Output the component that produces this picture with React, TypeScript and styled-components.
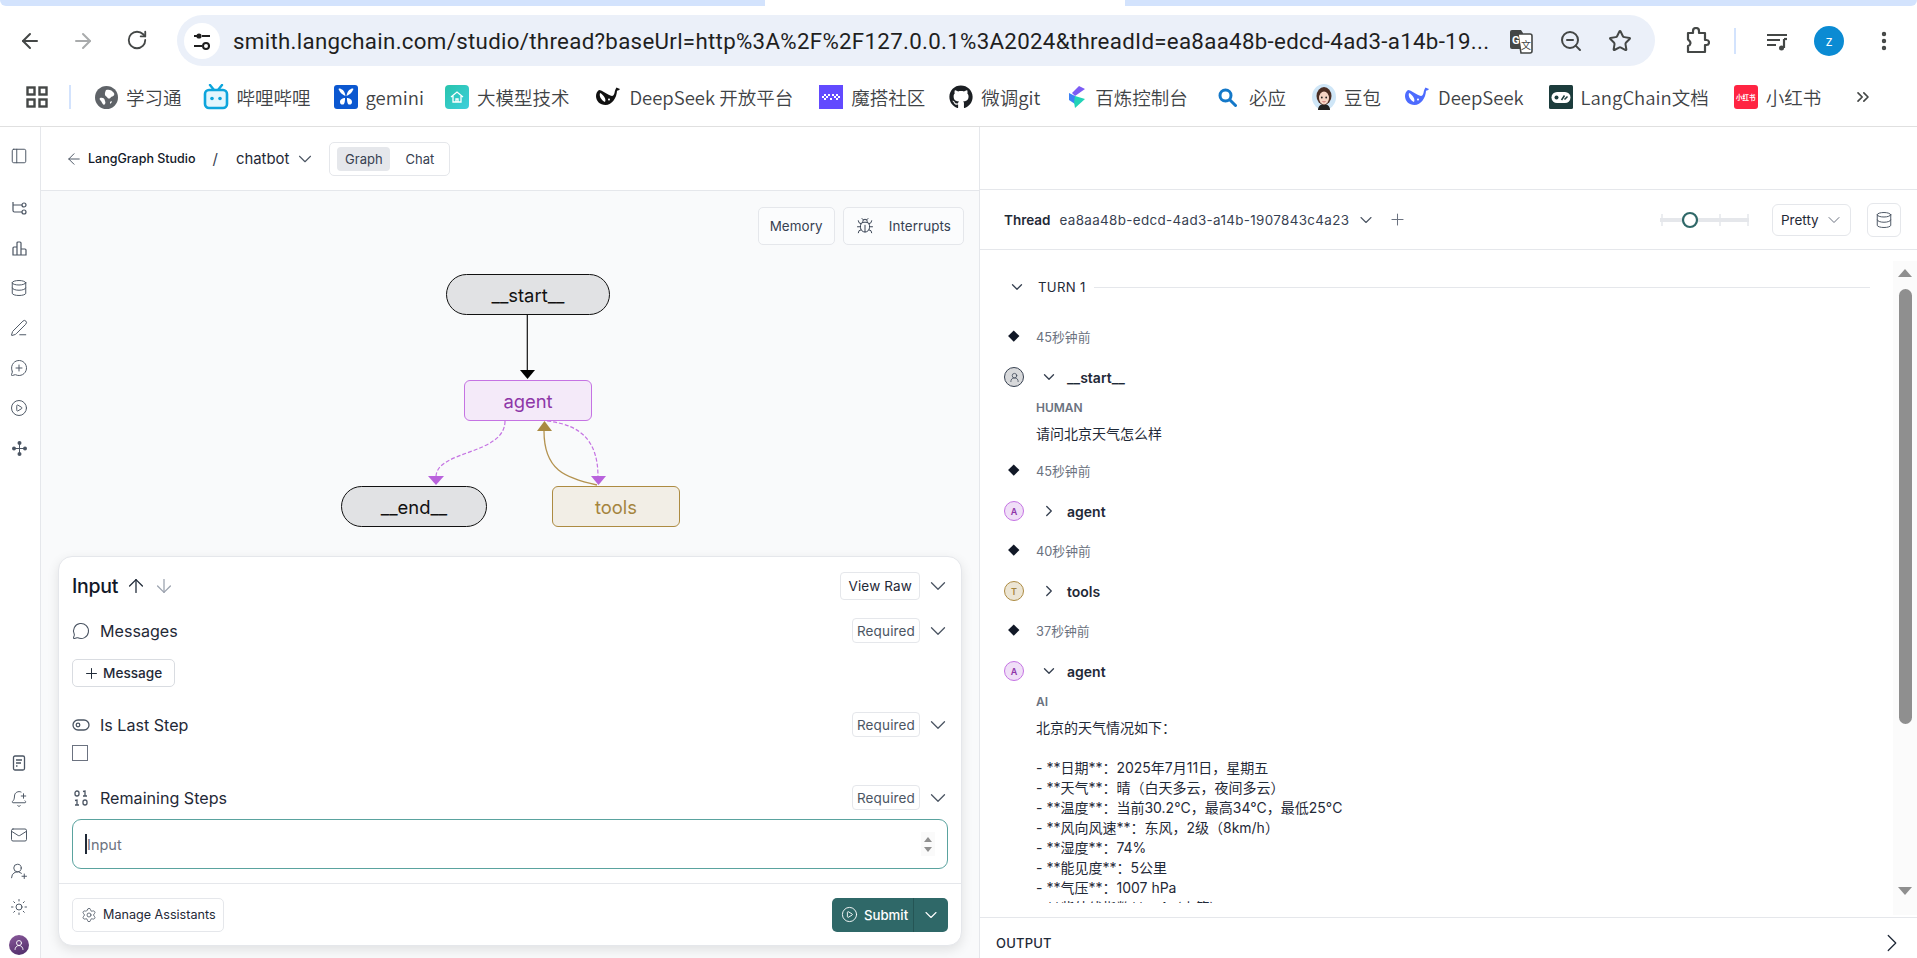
import React from 'react';
import styled, { createGlobalStyle } from 'styled-components';
import {
  ArrowDown, ArrowLeft, ArrowRight, ArrowUp, BellPlus, Bug, ChevronDown, ChevronRight, CirclePlay, Database,
  EllipsisVertical, Mail, MessageCircle, MessageCirclePlus, PanelLeft, PenLine, Plus, RotateCw, Settings,
  Star, Sun, UserRound, UserRoundPlus, ZoomOut, ChevronsRight,
} from 'lucide-react';
import { FaGithub } from 'react-icons/fa';

const GlobalStyle = createGlobalStyle`
  html, body { margin: 0; padding: 0; background: #fff; overflow: hidden; }
  body { font-family: Inter, "Noto Sans CJK SC", sans-serif; color: #111827; }
  * { box-sizing: border-box; }
`;

const Page = styled.div`
  width: 1917px;
  height: 958px;
  display: flex;
  flex-direction: column;
  overflow: hidden;
`;

/* browser chrome */
const TabStrip = styled.div`
  height: 6px;
  flex: none;
  display: flex;
  justify-content: space-between;
`;
const InactiveTabs = styled.div<{ $side: 'left' | 'right' }>`
  width: ${p => (p.$side === 'left' ? 765 : 792)}px;
  background: #d3e3fd;
  border-bottom-${p => p.$side}-radius: 6px;
`;
const Toolbar = styled.div`
  display: flex;
  align-items: center;
  height: 51px;
  margin-top: 9px;
  padding-left: 18px;
  flex: none;
  color: #444746;
`;
const NavButton = styled.div<{ $off?: boolean; $gap?: number }>`
  width: 24px;
  height: 24px;
  margin-left: ${p => p.$gap ?? 0}px;
  color: ${p => (p.$off ? '#a9abac' : '#444746')};
`;
const AddressBar = styled.div`
  width: 1478px;
  height: 51px;
  margin-left: 27px;
  padding-left: 7px;
  border-radius: 26px;
  background: #ebf0f9;
  display: flex;
  align-items: center;
`;
const TuneBadge = styled.div`
  width: 36px;
  height: 36px;
  border-radius: 50%;
  background: #fff;
  display: flex;
  align-items: center;
  justify-content: center;
  flex: none;
`;
const UrlText = styled.div`
  margin-left: 13px;
  width: 1273px;
  font-family: Roboto, sans-serif;
  font-size: 22.3px;
  letter-spacing: 0.3px;
  color: #1f1f1f;
  white-space: nowrap;
  overflow: hidden;
`;
const BarIcons = styled.div`
  display: flex;
  align-items: center;
`;
const Slot = styled.div<{ $w?: number; $gap?: number }>`
  width: ${p => p.$w ?? 40}px;
  height: 40px;
  margin-left: ${p => p.$gap ?? 0}px;
  display: flex;
  align-items: center;
  justify-content: center;
  flex: none;
`;
const ToolDivider = styled.div`
  width: 2px;
  height: 26px;
  margin-left: 17px;
  background: #d3e3fd;
`;
const ProfileDot = styled.div`
  width: 30px;
  height: 30px;
  border-radius: 50%;
  background: #0b8bd3;
  color: #fff;
  font-size: 13px;
  display: flex;
  align-items: center;
  justify-content: center;
`;
const BookmarkBar = styled.div`
  height: 61px;
  flex: none;
  padding: 11px 0 9px 26px;
  display: flex;
  align-items: center;
  border-bottom: 1px solid #e0e0e0;
`;
const BookmarkDivider = styled.div`
  width: 2px;
  height: 24px;
  margin: 0 24px 0 21px;
  background: #d3e3fd;
`;
const Bookmark = styled.div<{ $gap?: number }>`
  display: flex;
  align-items: center;
  gap: 8px;
  margin-right: ${p => p.$gap ?? 25}px;
  font-family: "Noto Sans CJK SC", sans-serif;
  font-size: 18.5px;
  font-weight: 350;
  color: #3f4346;
  white-space: nowrap;
  svg { flex: none; }
`;
const XhsLogo = styled.div`
  width: 24px;
  height: 24px;
  background: #ff2442;
  border-radius: 3px;
  color: #fff;
  font-size: 6.5px;
  font-weight: 700;
  display: flex;
  align-items: center;
  justify-content: center;
  white-space: nowrap;
`;
const MoreBookmarks = styled.div`
  margin-left: 7px;
  display: flex;
  color: #444746;
`;

/* studio */
const Studio = styled.div`
  flex: 1;
  min-height: 0;
  display: flex;
`;
const Sidebar = styled.nav`
  width: 41px;
  flex: none;
  border-right: 1px solid #e5e7eb;
  display: flex;
  flex-direction: column;
  justify-content: space-between;
  align-items: center;
  color: #4b5563;
  padding: 19px 2px 3px 0;
`;
const SideGroup = styled.div`
  display: flex;
  flex-direction: column;
  align-items: center;
`;
const SideIcon = styled.div<{ $h?: number; $mb?: number }>`
  height: ${p => p.$h ?? 40}px;
  margin-bottom: ${p => p.$mb ?? 0}px;
  display: flex;
  align-items: center;
  justify-content: center;
`;
const SideAvatar = styled.div`
  width: 20px;
  height: 20px;
  margin-top: 10px;
  border-radius: 50%;
  background: linear-gradient(160deg, #8a5a9c, #4d2a66);
  color: #fff;
  display: flex;
  align-items: center;
  justify-content: center;
`;
const GraphPane = styled.section`
  width: 939px;
  flex: none;
  display: flex;
  flex-direction: column;
  border-right: 1px solid #e5e7eb;
  background: #f9fafb;
`;
const StudioHeader = styled.header`
  height: 64px;
  flex: none;
  padding-left: 24px;
  display: flex;
  align-items: center;
  background: #fff;
  border-bottom: 1px solid #e5e7eb;
`;
const Crumb = styled.div`
  display: flex;
  align-items: center;
  gap: 5px;
  font-size: 12.5px;
  font-weight: 450;
  color: #111827;
  svg { color: #4b5563; flex: none; }
`;
const Slash = styled.span`
  margin: 0 18px 0 17px;
  font-size: 15px;
  color: #374151;
`;
const GraphName = styled.div`
  display: flex;
  align-items: center;
  gap: 5px;
  font-size: 14.9px;
  color: #1f2937;
  svg { color: #4b5563; flex: none; }
`;
const ViewTabs = styled.div`
  margin-left: 13px;
  height: 34px;
  padding: 4px 0 4px 7px;
  display: flex;
  align-items: center;
  border: 1px solid #e5e7eb;
  border-radius: 5px;
`;
const ViewTab = styled.div<{ $active?: boolean }>`
  height: 24px;
  width: ${p => (p.$active ? 53 : 59)}px;
  border-radius: 4px;
  display: flex;
  align-items: center;
  justify-content: center;
  font-size: 13px;
  color: #374151;
  background: ${p => (p.$active ? '#e5e7eb' : 'transparent')};
`;
const Canvas = styled.div`
  position: relative;
  flex: 1;
  min-height: 0;
`;
const CanvasTools = styled.div`
  position: absolute;
  top: 16px;
  right: 15px;
  display: flex;
  gap: 8px;
`;
const ToolButton = styled.div<{ $pad: number; $gap?: number }>`
  height: 38px;
  padding: 0 ${p => p.$pad}px;
  display: flex;
  align-items: center;
  gap: ${p => p.$gap ?? 0}px;
  font-size: 13.4px;
  letter-spacing: 0.1px;
  color: #374151;
  background: #fbfcfd;
  border: 1px solid #e5e7eb;
  border-radius: 5px;
`;
const Edges = styled.svg`
  position: absolute;
  inset: 0;
`;
const GraphNode = styled.div<{ $x: number; $y: number; $w: number; $kind: 'plain' | 'agent' | 'tools' }>`
  position: absolute;
  left: ${p => p.$x}px;
  top: ${p => p.$y}px;
  width: ${p => p.$w}px;
  height: 41px;
  display: flex;
  align-items: center;
  justify-content: center;
  font-size: 18.4px;
  border-radius: ${p => (p.$kind === 'plain' ? '21px' : '6px')};
  border: 1px solid ${p => (p.$kind === 'plain' ? '#111' : p.$kind === 'agent' ? '#c573e3' : '#ad8b42')};
  background: ${p => (p.$kind === 'plain' ? '#e1e2e4' : p.$kind === 'agent' ? '#f4eaf9' : '#f2eee6')};
  color: ${p => (p.$kind === 'plain' ? '#111' : p.$kind === 'agent' ? '#8e37a8' : '#a5843e')};
`;
const InputPanel = styled.div`
  flex: none;
  height: 390px;
  margin: 0 17px 12px;
  background: #fff;
  border: 1px solid #e5e7eb;
  border-radius: 14px;
  box-shadow: 0 4px 12px rgba(0, 0, 0, 0.1);
  display: flex;
  flex-direction: column;
`;
const FormBody = styled.div`
  flex: 1;
  padding: 15px 13px 0;
`;
const FieldRow = styled.div<{ $mt?: number }>`
  display: flex;
  align-items: center;
  height: 25px;
  margin-top: ${p => p.$mt ?? 0}px;
`;
const TitleRow = styled(FieldRow)`
  height: 28px;
`;
const PanelTitle = styled.div`
  font-size: 19.5px;
  font-weight: 500;
  color: #111827;
  margin-right: 7px;
  letter-spacing: -0.3px;
`;
const SortIcon = styled.div<{ $dim?: boolean }>`
  width: 22px;
  margin-right: 6px;
  color: ${p => (p.$dim ? '#9ca3af' : '#1f2937')};
  display: flex;
`;
const FieldLabel = styled.div`
  display: flex;
  align-items: center;
  gap: 10px;
  font-size: 16.1px;
  color: #1f2937;
  flex: 1;
  svg { color: #4b5563; width: 18px; flex: none; }
`;
const Pill = styled.div<{ $strong?: boolean }>`
  height: ${p => (p.$strong ? 28 : 25)}px;
  padding: 0 ${p => (p.$strong ? 7 : 4)}px;
  display: flex;
  align-items: center;
  font-size: 13.5px;
  color: ${p => (p.$strong ? '#1f2937' : '#4b5563')};
  letter-spacing: 0.15px;
  border: 1px solid #e5e7eb;
  border-radius: 4px;
`;
const RowChevron = styled.div`
  width: 16px;
  margin: 0 2px 0 10px;
  display: flex;
  justify-content: center;
  color: #4b5563;
  svg { flex: none; }
`;
const AddButton = styled.div`
  width: 103px;
  height: 28px;
  margin-top: 16px;
  padding-left: 10px;
  display: flex;
  align-items: center;
  gap: 3px;
  font-size: 13.6px;
  font-weight: 450;
  color: #1f2937;
  border: 1px solid #d9dce1;
  border-radius: 5px;
  svg { flex: none; }
`;
const CheckBox = styled.div`
  width: 16px;
  height: 16px;
  margin-top: 8px;
  border: 1px solid #6b7280;
`;
const NumberField = styled.div`
  height: 50px;
  margin-top: 9px;
  padding: 0 12px;
  display: flex;
  align-items: center;
  justify-content: space-between;
  border: 1px solid #5aa39f;
  border-radius: 9px;
  font-size: 14.5px;
  color: #6b7280;
`;
const Placeholder = styled.div`
  display: flex;
  align-items: center;
`;
const Caret = styled.span`
  width: 2px;
  height: 20px;
  background: #1f2937;
`;
const Spinner = styled.div`
  width: 14px;
  height: 24px;
  display: flex;
  flex-direction: column;
  align-items: center;
  justify-content: center;
  gap: 5px;
  background: #fafafa;
`;
const SpinArrow = styled.div<{ $down?: boolean }>`
  width: 0;
  height: 0;
  border-left: 4px solid transparent;
  border-right: 4px solid transparent;
  ${p => (p.$down ? 'border-top: 5px solid #8f8f8f;' : 'border-bottom: 5px solid #8f8f8f;')}
`;
const PanelFooter = styled.div`
  height: 62px;
  padding: 0 13px;
  flex: none;
  display: flex;
  align-items: center;
  justify-content: space-between;
  border-top: 1px solid #e5e7eb;
`;
const ManageButton = styled.div`
  width: 152px;
  height: 34px;
  padding-left: 8px;
  display: flex;
  align-items: center;
  gap: 6px;
  font-size: 12.6px;
  color: #1f2937;
  border: 1px solid #e5e7eb;
  border-radius: 5px;
  svg { color: #4b5563; flex: none; }
`;
const SubmitGroup = styled.div`
  width: 116px;
  height: 34px;
  display: flex;
  color: #fff;
  background: #2f6868;
  border-radius: 5px;
`;
const SubmitMain = styled.div`
  width: 82px;
  padding-left: 9px;
  display: flex;
  align-items: center;
  gap: 6px;
  font-size: 13.2px;
  font-weight: 500;
  border-right: 1px solid #255555;
  svg { flex: none; }
`;
const SubmitMore = styled.div`
  flex: 1;
  display: flex;
  align-items: center;
  justify-content: center;
`;

/* thread */
const ThreadPane = styled.section`
  flex: 1;
  min-width: 0;
  display: flex;
  flex-direction: column;
`;
const ThreadTopGap = styled.div`
  height: 63px;
  flex: none;
  border-bottom: 1px solid #e5e7eb;
`;
const ThreadBar = styled.div`
  height: 60px;
  flex: none;
  padding: 0 16px 0 24px;
  display: flex;
  align-items: center;
  border-bottom: 1px solid #e5e7eb;
  font-size: 13.4px;
  color: #374151;
`;
const ThreadLabel = styled.b`
  font-weight: 600;
  font-size: 13.5px;
  color: #1f2937;
  margin-right: 9px;
`;
const ThreadId = styled.span`
  letter-spacing: 0.35px;
`;
const BarChevron = styled.div`
  margin-left: 7px;
  display: flex;
  color: #4b5563;
`;
const BarPlus = styled.div`
  margin-left: 12px;
  display: flex;
  color: #6b7280;
`;
const BarRight = styled.div`
  margin-left: auto;
  display: flex;
  align-items: center;
`;
const PrettySelect = styled.div`
  width: 79px;
  height: 32px;
  margin-left: 21px;
  padding-left: 8px;
  display: flex;
  align-items: center;
  gap: 5px;
  font-size: 13.5px;
  color: #1f2937;
  border: 1px solid #e5e7eb;
  border-radius: 6px;
  svg { color: #6b7280; flex: none; }
`;
const IconBox = styled.div`
  width: 34px;
  height: 34px;
  margin-left: 16px;
  display: flex;
  align-items: center;
  justify-content: center;
  color: #4b5563;
  border: 1px solid #e5e7eb;
  border-radius: 6px;
`;
const ThreadBody = styled.div`
  flex: 1;
  min-height: 0;
  display: flex;
`;
const Scroller = styled.div`
  flex: 1;
  min-width: 0;
  height: 653px;
  overflow: hidden;
  padding: 26px 23px 0 24px;
`;
const TurnRow = styled.div`
  height: 22px;
  display: flex;
  align-items: center;
  font-size: 13.2px;
  color: #1f2937;
  letter-spacing: 0.3px;
  svg { margin: 0 12px 0 4px; color: #374151; flex: none; }
`;
const TurnLine = styled.div`
  flex: 1;
  height: 1px;
  margin-left: 8px;
  background: #e5e7eb;
`;
const Timeline = styled.div`
  margin-top: 20px;
`;
const TimeRow = styled.div<{ $mt?: number }>`
  height: 38px;
  padding-bottom: 2px;
  margin-top: ${p => p.$mt ?? 0}px;
  display: flex;
  align-items: center;
  font-size: 12.8px;
  color: #6b7280;
`;
const DiamondSlot = styled.div`
  width: 20px;
  margin-right: 12px;
  display: flex;
  justify-content: center;
`;
const Diamond = styled.div`
  width: 7.5px;
  height: 7.5px;
  background: #111827;
  transform: rotate(45deg);
`;
const NodeRow = styled.div`
  height: 42px;
  display: flex;
  align-items: center;
  font-size: 14px;
  font-weight: 600;
  color: #1f2937;
`;
const NodeAvatar = styled.div<{ $kind: 'human' | 'agent' | 'tools' }>`
  width: 20px;
  height: 20px;
  flex: none;
  border-radius: 50%;
  display: flex;
  align-items: center;
  justify-content: center;
  font-size: 9px;
  font-weight: 600;
  border: 1px solid ${p => (p.$kind === 'human' ? '#374151' : p.$kind === 'agent' ? '#c573e3' : '#ad8b42')};
  background: ${p => (p.$kind === 'human' ? '#d8d9db' : p.$kind === 'agent' ? '#f0dff7' : '#ece5d4')};
  color: ${p => (p.$kind === 'human' ? '#374151' : p.$kind === 'agent' ? '#8e37a8' : '#a5843e')};
`;
const NodeChevron = styled.div`
  margin: 0 9px 0 16px;
  display: flex;
  color: #374151;
`;
const RoleLabel = styled.div`
  height: 16px;
  margin: 1px 0 0 32px;
  display: flex;
  align-items: center;
  font-size: 12px;
  font-weight: 600;
  color: #6b7280;
`;
const MessageText = styled.div`
  margin: 9px 0 8px 32px;
  font-size: 14px;
  line-height: 20px;
  color: #1f2937;
  white-space: pre-wrap;
`;
const ScrollTrack = styled.div`
  width: 24px;
  flex: none;
  height: 654px;
  margin-top: 11px;
  display: flex;
  flex-direction: column;
  align-items: center;
  background: #fbfbfb;
  margin-left: auto;
  padding: 8px 0 0 0;
`;
const ScrollThumb = styled.div`
  width: 13px;
  height: 435px;
  margin: 12px 0 163px;
  border-radius: 7px;
  background: #8f8f8f;
`;
const ScrollArrow = styled.div<{ $down?: boolean }>`
  width: 0;
  height: 0;
  border-left: 7px solid transparent;
  border-right: 7px solid transparent;
  ${p => (p.$down ? 'border-top: 8px solid #8f8f8f;' : 'border-bottom: 8px solid #8f8f8f;')}
`;
const OutputBar = styled.div`
  height: 41px;
  flex: none;
  padding: 10px 10px 0 16px;
  display: flex;
  align-items: center;
  justify-content: space-between;
  border-top: 1px solid #e5e7eb;
  font-size: 13px;
  font-weight: 500;
  color: #1f2937;
  letter-spacing: 0.2px;
`;

const TuneIcon = () => (
  <svg width="22" height="22" viewBox="0 0 22 22" fill="none" stroke="#1f1f1f" strokeWidth="2">
    <path d="M3 6h3M3 16h8M11 6h8M18 16h1" />
    <circle cx="8" cy="6" r="2.6" fill="#1f1f1f" stroke="none" />
    <circle cx="15" cy="16" r="3" />
  </svg>
);
const TranslateIcon = () => (
  <svg width="26" height="28" viewBox="0 0 26 28">
    <path d="M2 5a2 2 0 0 1 2-2h9l2 3v16H4a2 2 0 0 1-2-2z" fill="#444746" />
    <path d="M10 7h12a2 2 0 0 1 2 2v15a2 2 0 0 1-2 2H13z" fill="#fff" stroke="#444746" strokeWidth="1.6" />
    <text x="4" y="17" fontSize="11" fontWeight="700" fontFamily="Roboto, sans-serif" fill="#fff">G</text>
    <text x="13" y="22" fontSize="10" fontFamily="Noto Sans CJK SC, sans-serif" fill="#444746">文</text>
  </svg>
);
const ExtensionIcon = () => (
  <svg width="26" height="28" viewBox="0 0 26 28" fill="none" stroke="#444746" strokeWidth="2.2" strokeLinejoin="round">
    <path d="M4 6h5V4a2.5 2.5 0 0 1 6 0v2h6v7h1.5a2.5 2.5 0 0 1 0 5H21v7H4v-6a3 3 0 0 0 1-5.5 3 3 0 0 0-1-1z" />
  </svg>
);
const MediaIcon = () => (
  <svg width="24" height="24" viewBox="0 0 24 24" fill="none" stroke="#444746" strokeWidth="2.2">
    <path d="M2 6h20M2 11h13M2 16h9" />
    <path d="M19 10v9" />
    <path d="M19 10h3" />
    <circle cx="16.5" cy="19" r="2.5" fill="#444746" stroke="none" />
  </svg>
);
const AppsIcon = () => (
  <svg width="22" height="22" viewBox="0 0 22 22" fill="none" stroke="#444746" strokeWidth="2.4">
    <rect x="1.5" y="1.5" width="7" height="7" />
    <rect x="13.5" y="1.5" width="7" height="7" />
    <rect x="1.5" y="13.5" width="7" height="7" />
    <rect x="13.5" y="13.5" width="7" height="7" />
  </svg>
);
const GlobeLogo = () => (
  <svg width="23" height="23" viewBox="0 0 23 23">
    <circle cx="11.5" cy="11.5" r="11.5" fill="#5f6368" />
    <path d="M11 4c3-1 6 0 8 3 1 3-1 3-3 4-1 2-3 2-4 0-2-1-3-3-1-7zM5 12c2-1 5 0 5 3 1 2 0 3-1 4-2-1-2-3-3-4s-2-2-1-3zM15 16c1-1 2-1 2 0l-2 2z" fill="#fff" />
  </svg>
);
const BiliLogo = () => (
  <svg width="26" height="26" viewBox="0 0 26 26" fill="none">
    <path d="M7 1l4 5M19 1l-4 5" stroke="#0da5dc" strokeWidth="2.4" strokeLinecap="round" />
    <rect x="2" y="6" width="22" height="18" rx="4" fill="#e3f6fd" stroke="#0da5dc" strokeWidth="2.6" />
    <circle cx="9" cy="14.5" r="1.8" fill="#0da5dc" />
    <circle cx="17" cy="14.5" r="1.8" fill="#0da5dc" />
  </svg>
);
const ButterflyLogo = () => (
  <svg width="24" height="24" viewBox="0 0 24 24">
    <rect width="24" height="24" rx="3" fill="#0b57d0" />
    <path d="M11.5 11C9 10 6 8 5 5c-1-1 0-2 2-1 3 1 4 4 4.5 7zM12.5 11C15 10 18 8 19 5c1-1 0-2-2-1-3 1-4 4-4.5 7zM11 13c-2 0-5 1-5 4 0 3 3 3 4 2 1-2 1-4 1-6zM13 13c2 0 5 1 5 4 0 3-3 3-4 2-1-2-1-4-1-6z" fill="#fff" />
  </svg>
);
const HouseLogo = () => (
  <svg width="24" height="24" viewBox="0 0 24 24" fill="none">
    <defs>
      <linearGradient id="houseBg" x1="0" y1="0" x2="1" y2="1">
        <stop offset="0" stopColor="#28c4ac" />
        <stop offset="1" stopColor="#3dcfdc" />
      </linearGradient>
    </defs>
    <rect width="24" height="24" rx="4" fill="url(#houseBg)" />
    <path d="M6 12l6-5 6 5M8 11v6h8v-6M11 17v-3h2v3" stroke="#fff" strokeWidth="1.3" />
  </svg>
);
const WhaleLogo = ({ color, size = 26 }: { color: string; size?: number }) => (
  <svg width={size} height={size} viewBox="0 0 26 26">
    <path d="M25 5c-.8 1-1.8 1.5-3 1.8-.2 7-5 14.2-11.5 14.2C5 21 1 17 1 12c0-3 1.5-5 3-6 3 0 9 5 13 6 1 0 2-1 2.5-3 .3-2 1-4 2-5.5 1 .5 2 1 3.5 1.5z" fill={color} />
    <path d="M5 9c-1 3 1 7 5 9 1-2 0-4-1-5.5C8 11 6.5 9.5 5 9zM14 14.5c.5 0 1 .5 1 1s-.5 1-1 1-1-.5-1-1 .5-1 1-1z" fill="#fff" />
  </svg>
);
const ModelScopeLogo = () => (
  <svg width="24" height="24" viewBox="0 0 24 24">
    <rect width="24" height="24" fill="#624aff" />
    <path d="M5 9h2v2H5zM3 11h2v2H3zM5 13h2v2H5zM17 9h2v2h-2zM19 11h2v2h-2zM17 13h2v2h-2zM9 9h2v2H9zM13 9h2v2h-2zM11 13h2v2h-2zM9 11H7v2h2zM15 11h2v2h-2z" fill="#fff" />
  </svg>
);
const BailianLogo = () => (
  <svg width="20" height="24" viewBox="0 0 20 24">
    <path d="M12 1l6 3-10 7-3-3z" fill="#7c5cf5" />
    <path d="M2 8l6 3v8l-6-4z" fill="#3b82f6" />
    <path d="M8 11l10 3-10 9-1-6z" fill="#22d3b7" />
  </svg>
);
const BingSearchLogo = () => (
  <svg width="19" height="19" viewBox="0 0 19 19" fill="none" stroke="#1478c8" strokeWidth="3">
    <circle cx="7.5" cy="7.5" r="5.5" />
    <path d="M12 12l5.5 5.5" strokeLinecap="round" />
  </svg>
);
const DoubaoLogo = () => (
  <svg width="24" height="26" viewBox="0 0 24 26">
    <ellipse cx="12" cy="13" rx="12" ry="13" fill="#cfe6f7" />
    <path d="M6 26c0-4 3-6 6-6s6 2 6 6z" fill="#222" />
    <ellipse cx="12" cy="12" rx="7.5" ry="9" fill="#4b2e24" />
    <ellipse cx="12" cy="14" rx="5" ry="6.5" fill="#f6d5c5" />
    <circle cx="9.8" cy="13.5" r="0.9" fill="#222" />
    <circle cx="14.2" cy="13.5" r="0.9" fill="#222" />
    <path d="M10.5 17.5q1.5 1 3 0" stroke="#c2555a" fill="none" strokeWidth="0.8" />
  </svg>
);
const LangChainLogo = () => (
  <svg width="24" height="24" viewBox="0 0 24 24">
    <rect width="24" height="24" rx="1.5" fill="#1c3c3c" />
    <rect x="2.5" y="7" width="19" height="11" rx="5.5" fill="#fff" />
    <circle cx="7.5" cy="12.5" r="2" fill="#1c3c3c" />
    <path d="M12.5 15l3-4.5M15.5 14.5l3-3" stroke="#1c3c3c" strokeWidth="1.5" />
  </svg>
);

const RouteIcon = () => (
  <svg width="15" height="15" viewBox="0 0 15 15" fill="none" stroke="currentColor" strokeWidth="1.2">
    <path d="M1 1v8.5a1.5 1.5 0 0 0 1.5 1.5H10M1 4h9" />
    <circle cx="12" cy="4" r="2" />
    <circle cx="12" cy="11" r="2" />
  </svg>
);
const BarsIcon = () => (
  <svg width="15" height="15" viewBox="0 0 15 15" fill="none" stroke="currentColor" strokeWidth="1.2">
    <path d="M1 14V7a1 1 0 0 1 1-1h3v8zM5 14V2a1 1 0 0 1 1-1h2a1 1 0 0 1 1 1v12zM9 8h4a1 1 0 0 1 1 1v5H9zM1 14h13" />
  </svg>
);
const DotsIcon = () => (
  <svg width="15" height="15" viewBox="0 0 15 15" fill="currentColor">
    <circle cx="7.5" cy="2" r="2" />
    <circle cx="2" cy="7.5" r="2" />
    <circle cx="13" cy="7.5" r="2" />
    <circle cx="7.5" cy="13" r="2" />
    <path d="M3 7h9v1H3zM7 3h1v9H7z" />
  </svg>
);
const DocIcon = () => (
  <svg width="14" height="16" viewBox="0 0 14 16" fill="none" stroke="currentColor" strokeWidth="1.3">
    <rect x="1.5" y="1" width="11" height="14" rx="1.5" />
    <path d="M4 5h6M4 8h5M4 11h1.5" />
  </svg>
);
const BinaryIcon = () => (
  <svg width="18" height="18" viewBox="0 0 18 18" fill="none" stroke="currentColor" strokeWidth="1.3">
    <rect x="3" y="2" width="4" height="5" rx="2" />
    <path d="M11 2.5l2-.5v5M11 7h4M3 11.5l2-.5v5M3 16h4" />
    <rect x="11" y="11" width="4" height="5" rx="2" />
  </svg>
);
const ToggleIcon = () => (
  <svg width="18" height="12" viewBox="0 0 18 12" fill="none" stroke="currentColor" strokeWidth="1.3">
    <rect x="1" y="1" width="16" height="10" rx="5" />
    <circle cx="6" cy="6" r="1.8" />
  </svg>
);
const HistorySlider = () => (
  <svg width="92" height="18" viewBox="0 0 92 18">
    <rect x="1" y="7" width="89" height="4" fill="#e5e7eb" />
    <path d="M3 3v12M61 3v12M89 3v12" stroke="#e5e7eb" strokeWidth="1.5" />
    <circle cx="31" cy="9" r="7" fill="#fff" stroke="#2f6868" strokeWidth="2.2" />
  </svg>
);

const GraphEdges = () => (
  <Edges width="938" height="365" viewBox="41 191 938 365" fill="none">
    <path d="M527.3 314V371" stroke="#111" strokeWidth="1.2" />
    <path d="M520 370h15l-7.5 9z" fill="#000" />
    <path d="M505 421C505 455 436 450 436 477" stroke="#c573e3" strokeWidth="1.2" strokeDasharray="4 2" />
    <path d="M428 476h16l-8 9z" fill="#b962dc" />
    <path d="M547 421C585 425 598 445 598 477" stroke="#c573e3" strokeWidth="1.2" strokeDasharray="4 2" />
    <path d="M591 476h15l-7.5 9z" fill="#b962dc" />
    <path d="M597 485C565 478 544 470 544 431" stroke="#b49350" strokeWidth="1.3" />
    <path d="M537 431h15l-7.5-10z" fill="#a98a41" />
  </Edges>
);

const AI_REPLY = `北京的天气情况如下：

- **日期**：2025年7月11日，星期五
- **天气**：晴（白天多云，夜间多云）
- **温度**：当前30.2°C，最高34°C，最低25°C
- **风向风速**：东风，2级（8km/h）
- **湿度**：74%
- **能见度**：5公里
- **气压**：1007 hPa
- **紫外线指数**：4（中等）`;

const sideTop = [<RouteIcon />, <BarsIcon />, <Database size={18} strokeWidth={1.3} />, <PenLine size={18} strokeWidth={1.3} />, <MessageCirclePlus size={18} strokeWidth={1.3} />, <CirclePlay size={18} strokeWidth={1.3} />, <DotsIcon />];
const sideBottom = [<DocIcon />, <BellPlus size={18} strokeWidth={1.3} />, <Mail size={18} strokeWidth={1.3} />, <UserRoundPlus size={18} strokeWidth={1.3} />, <Sun size={18} strokeWidth={1.3} />];

const Chevron = () => <ChevronDown size={26} strokeWidth={1.2} />;

const App = () => (
  <Page>
    <GlobalStyle />
    <TabStrip>
      <InactiveTabs $side="left" />
      <InactiveTabs $side="right" />
    </TabStrip>
    <Toolbar>
      <NavButton><ArrowLeft size={24} strokeWidth={2} /></NavButton>
      <NavButton $off $gap={29}><ArrowRight size={24} strokeWidth={2} /></NavButton>
      <NavButton $gap={31}><RotateCw size={22} strokeWidth={2} /></NavButton>
      <AddressBar>
        <TuneBadge><TuneIcon /></TuneBadge>
        <UrlText>smith.langchain.com/studio/thread?baseUrl=http%3A%2F%2F127.0.0.1%3A2024&amp;threadId=ea8aa48b-edcd-4ad3-a14b-19...</UrlText>
        <BarIcons>
          <Slot $w={30}><TranslateIcon /></Slot>
          <Slot $w={30} $gap={20}><ZoomOut size={24} strokeWidth={2} /></Slot>
          <Slot $w={30} $gap={19}><Star size={24} strokeWidth={2} /></Slot>
        </BarIcons>
      </AddressBar>
      <Slot $gap={22}><ExtensionIcon /></Slot>
      <ToolDivider />
      <Slot $gap={21}><MediaIcon /></Slot>
      <Slot $gap={12}><ProfileDot>z</ProfileDot></Slot>
      <Slot $gap={15}><EllipsisVertical size={24} strokeWidth={2.4} /></Slot>
    </Toolbar>
    <BookmarkBar>
      <AppsIcon />
      <BookmarkDivider />
      <Bookmark $gap={21}><GlobeLogo />学习通</Bookmark>
      <Bookmark $gap={23}><BiliLogo />哔哩哔哩</Bookmark>
      <Bookmark $gap={21}><ButterflyLogo />gemini</Bookmark>
      <Bookmark $gap={26}><HouseLogo />大模型技术</Bookmark>
      <Bookmark $gap={26}><WhaleLogo color="#111" />DeepSeek 开放平台</Bookmark>
      <Bookmark $gap={24}><ModelScopeLogo />魔搭社区</Bookmark>
      <Bookmark $gap={27}><FaGithub size={24} color="#1b1f23" />微调git</Bookmark>
      <Bookmark $gap={30}><BailianLogo />百炼控制台</Bookmark>
      <Bookmark $gap={26}><BingSearchLogo />&nbsp;必应</Bookmark>
      <Bookmark $gap={23}><DoubaoLogo />豆包</Bookmark>
      <Bookmark><WhaleLogo color="#4d6bfe" />DeepSeek</Bookmark>
      <Bookmark><LangChainLogo />LangChain文档</Bookmark>
      <Bookmark><XhsLogo>小红书</XhsLogo>小红书</Bookmark>
      <MoreBookmarks><ChevronsRight size={20} strokeWidth={2} /></MoreBookmarks>
    </BookmarkBar>

    <Studio>
      <Sidebar>
        <SideGroup>
          <SideIcon $h={20} $mb={22}><PanelLeft size={18} strokeWidth={1.3} /></SideIcon>
          {sideTop.map((icon, i) => <SideIcon key={i}>{icon}</SideIcon>)}
        </SideGroup>
        <SideGroup>
          {sideBottom.map((icon, i) => <SideIcon key={i} $h={36}>{icon}</SideIcon>)}
          <SideAvatar><UserRound size={12} strokeWidth={1.8} /></SideAvatar>
        </SideGroup>
      </Sidebar>

      <GraphPane>
        <StudioHeader>
          <Crumb><ArrowLeft size={18} strokeWidth={1.3} />LangGraph Studio</Crumb>
          <Slash>/</Slash>
          <GraphName>chatbot<ChevronDown size={22} strokeWidth={1.2} /></GraphName>
          <ViewTabs>
            <ViewTab $active>Graph</ViewTab>
            <ViewTab>Chat</ViewTab>
          </ViewTabs>
        </StudioHeader>
        <Canvas>
          <GraphEdges />
          <GraphNode $kind="plain" $x={405} $y={83} $w={164}>__start__</GraphNode>
          <GraphNode $kind="agent" $x={423} $y={189} $w={128}>agent</GraphNode>
          <GraphNode $kind="plain" $x={300} $y={295} $w={146}>__end__</GraphNode>
          <GraphNode $kind="tools" $x={511} $y={295} $w={128}>tools</GraphNode>
          <CanvasTools>
            <ToolButton $pad={11}>Memory</ToolButton>
            <ToolButton $pad={12} $gap={15}><Bug size={18} strokeWidth={1.3} />Interrupts</ToolButton>
          </CanvasTools>
        </Canvas>
        <InputPanel>
          <FormBody>
            <TitleRow>
              <PanelTitle>Input</PanelTitle>
              <SortIcon><ArrowUp size={22} strokeWidth={1.4} /></SortIcon>
              <SortIcon $dim><ArrowDown size={22} strokeWidth={1.4} /></SortIcon>
              <FieldLabel />
              <Pill $strong>View Raw</Pill>
              <RowChevron><Chevron /></RowChevron>
            </TitleRow>
            <FieldRow $mt={18}>
              <FieldLabel><MessageCircle size={18} strokeWidth={1.4} />Messages</FieldLabel>
              <Pill>Required</Pill>
              <RowChevron><Chevron /></RowChevron>
            </FieldRow>
            <AddButton><Plus size={17} strokeWidth={1.4} />Message</AddButton>
            <FieldRow $mt={25}>
              <FieldLabel><ToggleIcon />Is Last Step</FieldLabel>
              <Pill>Required</Pill>
              <RowChevron><Chevron /></RowChevron>
            </FieldRow>
            <CheckBox />
            <FieldRow $mt={24}>
              <FieldLabel><BinaryIcon />Remaining Steps</FieldLabel>
              <Pill>Required</Pill>
              <RowChevron><Chevron /></RowChevron>
            </FieldRow>
            <NumberField>
              <Placeholder><Caret />Input</Placeholder>
              <Spinner><SpinArrow /><SpinArrow $down /></Spinner>
            </NumberField>
          </FormBody>
          <PanelFooter>
            <ManageButton><Settings size={16} strokeWidth={1.2} />Manage Assistants</ManageButton>
            <SubmitGroup>
              <SubmitMain><CirclePlay size={17} strokeWidth={1.3} />Submit</SubmitMain>
              <SubmitMore><ChevronDown size={20} strokeWidth={1.3} /></SubmitMore>
            </SubmitGroup>
          </PanelFooter>
        </InputPanel>
      </GraphPane>

      <ThreadPane>
        <ThreadTopGap />
        <ThreadBar>
          <ThreadLabel>Thread</ThreadLabel>
          <ThreadId>ea8aa48b-edcd-4ad3-a14b-1907843c4a23</ThreadId>
          <BarChevron><ChevronDown size={20} strokeWidth={1.3} /></BarChevron>
          <BarPlus><Plus size={19} strokeWidth={1.3} /></BarPlus>
          <BarRight>
            <HistorySlider />
            <PrettySelect>Pretty<ChevronDown size={20} strokeWidth={1.2} /></PrettySelect>
            <IconBox><Database size={18} strokeWidth={1.3} /></IconBox>
          </BarRight>
        </ThreadBar>
        <ThreadBody>
          <Scroller>
            <TurnRow><ChevronDown size={18} strokeWidth={1.7} />TURN 1<TurnLine /></TurnRow>
            <Timeline>
              <TimeRow><DiamondSlot><Diamond /></DiamondSlot>45秒钟前</TimeRow>
              <NodeRow>
                <NodeAvatar $kind="human"><UserRound size={11} strokeWidth={1.6} /></NodeAvatar>
                <NodeChevron><ChevronDown size={18} strokeWidth={1.8} /></NodeChevron>__start__
              </NodeRow>
              <RoleLabel>HUMAN</RoleLabel>
              <MessageText>请问北京天气怎么样</MessageText>
              <TimeRow><DiamondSlot><Diamond /></DiamondSlot>45秒钟前</TimeRow>
              <NodeRow>
                <NodeAvatar $kind="agent">A</NodeAvatar>
                <NodeChevron><ChevronRight size={18} strokeWidth={1.8} /></NodeChevron>agent
              </NodeRow>
              <TimeRow><DiamondSlot><Diamond /></DiamondSlot>40秒钟前</TimeRow>
              <NodeRow>
                <NodeAvatar $kind="tools">T</NodeAvatar>
                <NodeChevron><ChevronRight size={18} strokeWidth={1.8} /></NodeChevron>tools
              </NodeRow>
              <TimeRow><DiamondSlot><Diamond /></DiamondSlot>37秒钟前</TimeRow>
              <NodeRow>
                <NodeAvatar $kind="agent">A</NodeAvatar>
                <NodeChevron><ChevronDown size={18} strokeWidth={1.8} /></NodeChevron>agent
              </NodeRow>
              <RoleLabel>AI</RoleLabel>
              <MessageText>{AI_REPLY}</MessageText>
            </Timeline>
          </Scroller>
          <ScrollTrack>
            <ScrollArrow />
            <ScrollThumb />
            <ScrollArrow $down />
          </ScrollTrack>
        </ThreadBody>
        <OutputBar>OUTPUT<ChevronRight size={30} strokeWidth={1} /></OutputBar>
      </ThreadPane>
    </Studio>
  </Page>
);

export default App;
